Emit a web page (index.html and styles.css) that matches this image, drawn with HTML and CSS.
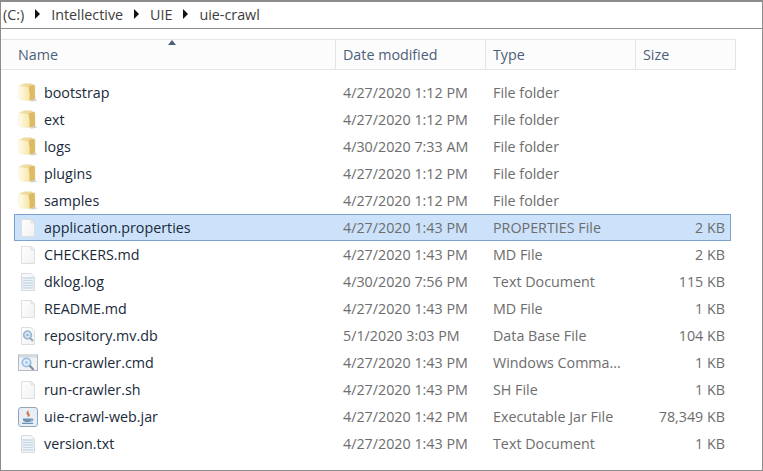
FILE: index.html
```html
<!DOCTYPE html>
<html lang="en">
<head>
    <meta charset="UTF-8">
    <title>uie-crawl</title>
    <link rel="stylesheet" href="styles.css">
</head>
<body>
    <svg class="defs" width="0" height="0">
        <defs>
            <linearGradient id="folderBack" x1="0" y1="0" x2="1" y2="0">
                <stop offset="0" stop-color="#f5e6ad"/>
                <stop offset="1" stop-color="#e8cf86"/>
            </linearGradient>
            <linearGradient id="folderFront" x1="0" y1="0" x2="1" y2="0">
                <stop offset="0" stop-color="#fffbe6"/>
                <stop offset="1" stop-color="#f6e6ab"/>
            </linearGradient>
            <linearGradient id="pageFill" x1="0" y1="0" x2="1" y2="1">
                <stop offset="0" stop-color="#ffffff"/>
                <stop offset="1" stop-color="#f1f1f1"/>
            </linearGradient>
            <symbol id="folder" viewBox="0 0 20 20">
                <path d="M1 3 L6 .8 L13 .8 L17 3 L17 17 L4 17 L1 15 Z" fill="url(#folderBack)" stroke="#e6d7a6" stroke-width=".5"/>
                <path d="M11 3.500 L16.500 1.500 L17 16 L11 17.500 Z" fill="#dcbb62"/>
                <path d="M1 3 L10.500 4.500 Q12.200 10 11.500 18 L4 17 L1 15 Z" fill="url(#folderFront)"/>
                <path d="M12 17.800 L17 16 L19.500 17.500 L13 18.800 Z" fill="#d2d2d2"/>
            </symbol>
            <symbol id="blank" viewBox="0 0 20 20">
                <path d="M3.500 1.500 H13 L16.500 5 V18.500 H3.500 Z" fill="url(#pageFill)" stroke="#dedede"/>
                <path d="M13 1.500 V5 H16.500 Z" fill="#f2f2f2" stroke="#d4d4d4" stroke-width=".6"/>
            </symbol>
            <symbol id="text" viewBox="0 0 20 20">
                <path d="M3.500 1.500 H13 L16.500 5 V18.500 H3.500 Z" fill="#f6f8fa" stroke="#d6dade"/>
                <path d="M4.500 6 H15.500 M4.500 8.500 H15.500 M4.500 11 H15.500 M4.500 13.500 H15.500 M4.500 16 H15.500" stroke="#c9d7e4" stroke-width="1.400"/>
            </symbol>
            <symbol id="db" viewBox="0 0 20 20">
                <path d="M3.500 1.500 H13 L16.500 5 V18.500 H3.500 Z" fill="url(#pageFill)" stroke="#dedede"/>
                <circle cx="9.500" cy="9" r="3.800" fill="#dbe9f7" stroke="#9cb6d2" stroke-width="1.800"/>
                <circle cx="9.500" cy="9" r="1.300" fill="#8fb0d0"/>
                <path d="M12 12 L15 15" stroke="#98a5b2" stroke-width="1.800"/>
            </symbol>
            <symbol id="cmd" viewBox="0 0 20 20">
                <rect x=".5" y="2" width="19" height="15.500" fill="#f0f2f5" stroke="#b4b9c0"/>
                <path d="M1 2.500 H19 V4.500 H1 Z" fill="#d4dae2"/>
                <circle cx="8.500" cy="9.500" r="4.200" fill="#e0effc" stroke="#9dc0e2" stroke-width="1.800"/>
                <circle cx="8.500" cy="9.500" r="1.500" fill="#a8c8e6"/>
                <path d="M11.500 12.500 L15.500 16.800" stroke="#7d8c9c" stroke-width="2"/>
            </symbol>
            <symbol id="jar" viewBox="0 0 20 20">
                <rect x=".5" y=".5" width="19" height="19" rx="2.500" fill="#e7eef6" stroke="#93a6ba"/>
                <path d="M10.500 3 Q7 6 9.500 8 Q10.500 9.500 9 10.500 Q13.500 8.500 11 6.500 Q10 5.500 10.500 3 Z" fill="#d8703a"/>
                <path d="M5 11.500 H13.500 V13 Q13 15 9.500 15 Q5.500 15 5 13 Z" fill="#6c93b6"/>
                <path d="M13.500 11.800 Q16 12 14.800 13.500 L13 14" fill="none" stroke="#6c93b6"/>
                <path d="M4 16.300 H15" stroke="#5f8ab0" stroke-width="1.200"/>
            </symbol>
        </defs>
    </svg>

    <div class="window">
        <div class="addressBar">
            <span>(C:)</span>
            <span class="arrow"></span>
            <span>Intellective</span>
            <span class="arrow"></span>
            <span>UIE</span>
            <span class="arrow"></span>
            <span>uie-crawl</span>
        </div>

        <div class="header">
            <div class="headCell">Name<span class="sort"></span></div>
            <div class="headCell">Date modified</div>
            <div class="headCell">Type</div>
            <div class="headCell">Size</div>
        </div>

        <div class="list">
            <div class="row">
                <div class="name"><svg class="icon"><use href="#folder"/></svg>bootstrap</div>
                <div class="cell">4/27/2020 1:12 PM</div><div class="cell">File folder</div><div class="cell size"></div>
            </div>
            <div class="row">
                <div class="name"><svg class="icon"><use href="#folder"/></svg>ext</div>
                <div class="cell">4/27/2020 1:12 PM</div><div class="cell">File folder</div><div class="cell size"></div>
            </div>
            <div class="row">
                <div class="name"><svg class="icon"><use href="#folder"/></svg>logs</div>
                <div class="cell">4/30/2020 7:33 AM</div><div class="cell">File folder</div><div class="cell size"></div>
            </div>
            <div class="row">
                <div class="name"><svg class="icon"><use href="#folder"/></svg>plugins</div>
                <div class="cell">4/27/2020 1:12 PM</div><div class="cell">File folder</div><div class="cell size"></div>
            </div>
            <div class="row">
                <div class="name"><svg class="icon"><use href="#folder"/></svg>samples</div>
                <div class="cell">4/27/2020 1:12 PM</div><div class="cell">File folder</div><div class="cell size"></div>
            </div>
            <div class="row selected">
                <div class="name"><svg class="icon"><use href="#blank"/></svg>application.properties</div>
                <div class="cell">4/27/2020 1:43 PM</div><div class="cell">PROPERTIES File</div><div class="cell size">2 KB</div>
            </div>
            <div class="row">
                <div class="name"><svg class="icon"><use href="#blank"/></svg>CHECKERS.md</div>
                <div class="cell">4/27/2020 1:43 PM</div><div class="cell">MD File</div><div class="cell size">2 KB</div>
            </div>
            <div class="row">
                <div class="name"><svg class="icon"><use href="#text"/></svg>dklog.log</div>
                <div class="cell">4/30/2020 7:56 PM</div><div class="cell">Text Document</div><div class="cell size">115 KB</div>
            </div>
            <div class="row">
                <div class="name"><svg class="icon"><use href="#blank"/></svg>README.md</div>
                <div class="cell">4/27/2020 1:43 PM</div><div class="cell">MD File</div><div class="cell size">1 KB</div>
            </div>
            <div class="row">
                <div class="name"><svg class="icon"><use href="#db"/></svg>repository.mv.db</div>
                <div class="cell">5/1/2020 3:03 PM</div><div class="cell">Data Base File</div><div class="cell size">104 KB</div>
            </div>
            <div class="row">
                <div class="name"><svg class="icon"><use href="#cmd"/></svg>run-crawler.cmd</div>
                <div class="cell">4/27/2020 1:43 PM</div><div class="cell">Windows Comma...</div><div class="cell size">1 KB</div>
            </div>
            <div class="row">
                <div class="name"><svg class="icon"><use href="#blank"/></svg>run-crawler.sh</div>
                <div class="cell">4/27/2020 1:43 PM</div><div class="cell">SH File</div><div class="cell size">1 KB</div>
            </div>
            <div class="row">
                <div class="name"><svg class="icon"><use href="#jar"/></svg>uie-crawl-web.jar</div>
                <div class="cell">4/27/2020 1:42 PM</div><div class="cell">Executable Jar File</div><div class="cell size">78,349 KB</div>
            </div>
            <div class="row">
                <div class="name"><svg class="icon"><use href="#text"/></svg>version.txt</div>
                <div class="cell">4/27/2020 1:43 PM</div><div class="cell">Text Document</div><div class="cell size">1 KB</div>
            </div>
        </div>
    </div>
</body>
</html>
```

FILE: styles.css
```css
html, body {
    margin: 0;
    height: 100%;
    background-color: #fff;
    overflow: hidden;
}
.defs {
    display: block;
    height: 0;
}
.window {
    box-sizing: border-box;
    width: 763px;
    height: 471px;
    border: 1px solid #8c8c8c;
    border-top-width: 2px;
    font-family: "Open Sans", sans-serif;
    font-size: 14.3px;
    color: #1f2a33;
}
.addressBar {
    display: flex;
    align-items: center;
    box-sizing: border-box;
    height: 27px;
    padding-left: 2px;
    padding-bottom: 2px;
    gap: 11px;
    border-bottom: 1px solid #8c8c8c;
    color: #3c3c3c;
}
.arrow {
    width: 0;
    height: 0;
    border-left: 5px solid #111;
    border-top: 5px solid transparent;
    border-bottom: 5px solid transparent;
}
.header {
    display: grid;
    grid-template-columns: 335px 150px 150px 100px;
    width: 735px;
    height: 31px;
    margin-top: 10px;
    box-sizing: border-box;
    border-top: 1px solid #e5e5e5;
    border-bottom: 1px solid #e5e5e5;
    background-color: #fcfcfc;
    color: #4c607a;
}
.headCell {
    position: relative;
    display: flex;
    align-items: center;
    padding-left: 7px;
    border-right: 1px solid #e5e5e5;
    box-sizing: border-box;
}
.headCell:first-child {
    padding-left: 17px;
}
.sort {
    position: absolute;
    left: 167px;
    top: 0;
    width: 0;
    height: 0;
    border-left: 4px solid transparent;
    border-right: 4px solid transparent;
    border-bottom: 5px solid #4c607a;
}
.list {
    margin-top: 9px;
}
.row {
    display: grid;
    grid-template-columns: 328px 150px 150px 82px;
    align-items: center;
    box-sizing: border-box;
    width: 717px;
    height: 27px;
    margin-left: 13px;
    border: 1px solid transparent;
    color: #6d6d6d;
}
.row.selected {
    background-color: #cce2fb;
    border-color: #7da2ce;
}
.name {
    display: flex;
    align-items: center;
    color: #1a2a3a;
}
.icon {
    width: 20px;
    height: 20px;
    margin-left: 3px;
    margin-right: 6px;
    flex-shrink: 0;
}
.size {
    text-align: right;
}
```
